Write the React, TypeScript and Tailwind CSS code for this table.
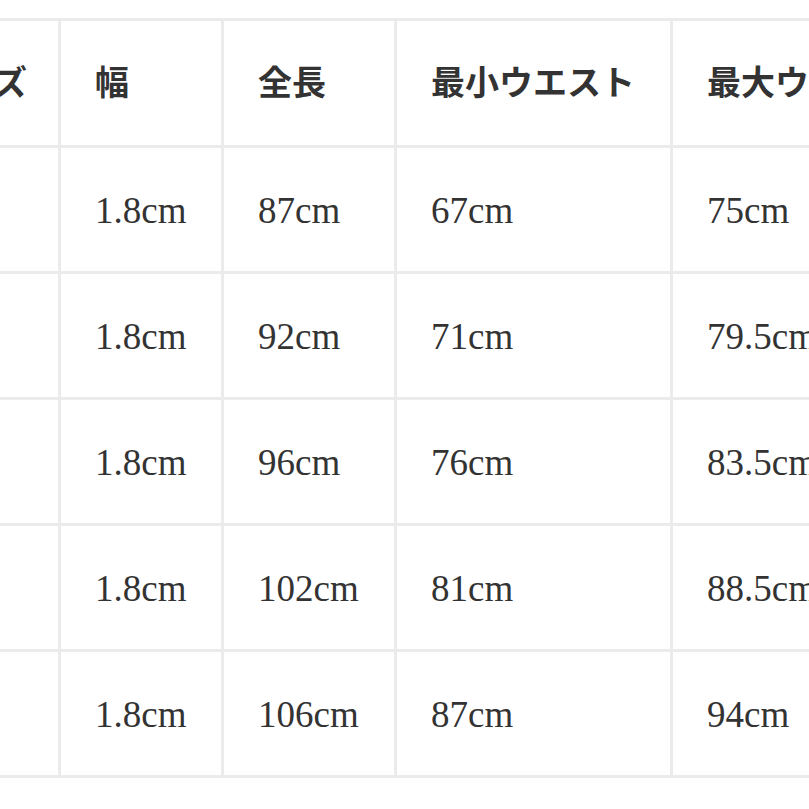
const headers = ["サイズ", "幅", "全長", "最小ウエスト", "最大ウエスト"];

const rows = [
  ["S", "1.8cm", "87cm", "67cm", "75cm"],
  ["M", "1.8cm", "92cm", "71cm", "79.5cm"],
  ["L", "1.8cm", "96cm", "76cm", "83.5cm"],
  ["XL", "1.8cm", "102cm", "81cm", "88.5cm"],
  ["XXL", "1.8cm", "106cm", "87cm", "94cm"],
];

export default function App() {
  return (
    <div className="w-[809px] h-[809px] overflow-hidden bg-white">
      <div
        className="mt-[18px] ml-[-111px] w-max grid grid-cols-[166px_160px_170px_273px_273px] gap-[3px] p-[3px] bg-[#ebebeb] text-[#333]"
        style={{ fontFamily: '"Liberation Serif", "Noto Sans CJK JP", serif' }}
      >
        {headers.map((h) => (
          <div
            key={h}
            className="h-[124px] bg-white flex items-center pl-[34px] text-[34px] font-semibold whitespace-nowrap"
          >
            {h}
          </div>
        ))}
        {rows.map((r, i) =>
          r.map((c, j) => (
            <div
              key={i + "-" + j}
              className={
                "h-[123px] bg-white flex items-center pl-[34px] pt-[3px] whitespace-nowrap " +
                (j === 0 ? "text-[34px]" : "text-[37px]")
              }
            >
              {c}
            </div>
          ))
        )}
      </div>
    </div>
  );
}
